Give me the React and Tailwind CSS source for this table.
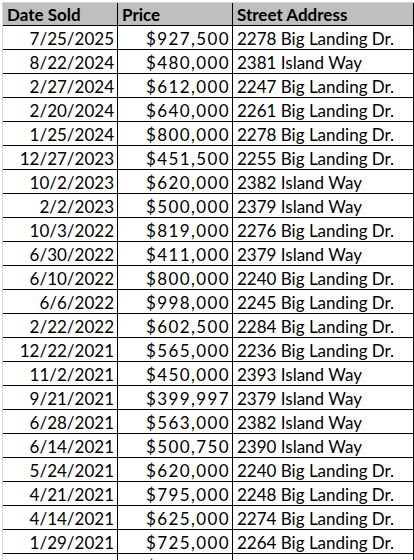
const rows = [
  ['7/25/2025', '$927,500', '2278 Big Landing Dr.'],
  ['8/22/2024', '$480,000', '2381 Island Way'],
  ['2/27/2024', '$612,000', '2247 Big Landing Dr.'],
  ['2/20/2024', '$640,000', '2261 Big Landing Dr.'],
  ['1/25/2024', '$800,000', '2278 Big Landing Dr.'],
  ['12/27/2023', '$451,500', '2255 Big Landing Dr.'],
  ['10/2/2023', '$620,000', '2382 Island Way'],
  ['2/2/2023', '$500,000', '2379 Island Way'],
  ['10/3/2022', '$819,000', '2276 Big Landing Dr.'],
  ['6/30/2022', '$411,000', '2379 Island Way'],
  ['6/10/2022', '$800,000', '2240 Big Landing Dr.'],
  ['6/6/2022', '$998,000', '2245 Big Landing Dr.'],
  ['2/22/2022', '$602,500', '2284 Big Landing Dr.'],
  ['12/22/2021', '$565,000', '2236 Big Landing Dr.'],
  ['11/2/2021', '$450,000', '2393 Island Way'],
  ['9/21/2021', '$399,997', '2379 Island Way'],
  ['6/28/2021', '$563,000', '2382 Island Way'],
  ['6/14/2021', '$500,750', '2390 Island Way'],
  ['5/24/2021', '$620,000', '2240 Big Landing Dr.'],
  ['4/21/2021', '$795,000', '2248 Big Landing Dr.'],
  ['4/14/2021', '$625,000', '2274 Big Landing Dr.'],
  ['1/29/2021', '$725,000', '2264 Big Landing Dr.'],
  ['12/18/2020', '$585,000', '2252 Big Landing Dr.'],
]

const font = { fontFamily: 'Lato, "Open Sans", sans-serif' }

export default function App() {
  return (
    <div className="h-[560px] w-[414px] overflow-hidden bg-white pl-[2px] pt-[2px] text-[17px] text-black" style={font}>
      <div className="grid w-[412px] grid-cols-[115px_115px_181px] border-l border-t border-[#d4d4d4]">
        <div className="h-[23px] border-b border-r border-black bg-[#bfbfbf] pl-[4px] pt-[1px] text-[17px] font-bold leading-[22px]">Date Sold</div>
        <div className="h-[23px] border-b border-r border-black bg-[#bfbfbf] pl-[4px] pt-[1px] text-[17px] font-bold leading-[22px]">Price</div>
        <div className="h-[23px] border-b border-r border-black bg-[#bfbfbf] pl-[4px] pt-[1px] text-[17px] font-bold leading-[22px]">Street Address</div>
        {rows.map((r) => (
          <div key={r[0]} className="contents">
            <div className="h-[24px] border-b border-r border-black pr-[3px] pt-[2px] text-right leading-[22px]">{r[0]}</div>
            <div className="h-[24px] border-b border-r border-black pr-[2px] pt-[2px] text-right leading-[22px] tracking-[1.4px]">{r[1]}</div>
            <div className="h-[24px] border-b border-r border-black pl-[4px] pt-[2px] leading-[22px]">{r[2]}</div>
          </div>
        ))}
      </div>
    </div>
  )
}
